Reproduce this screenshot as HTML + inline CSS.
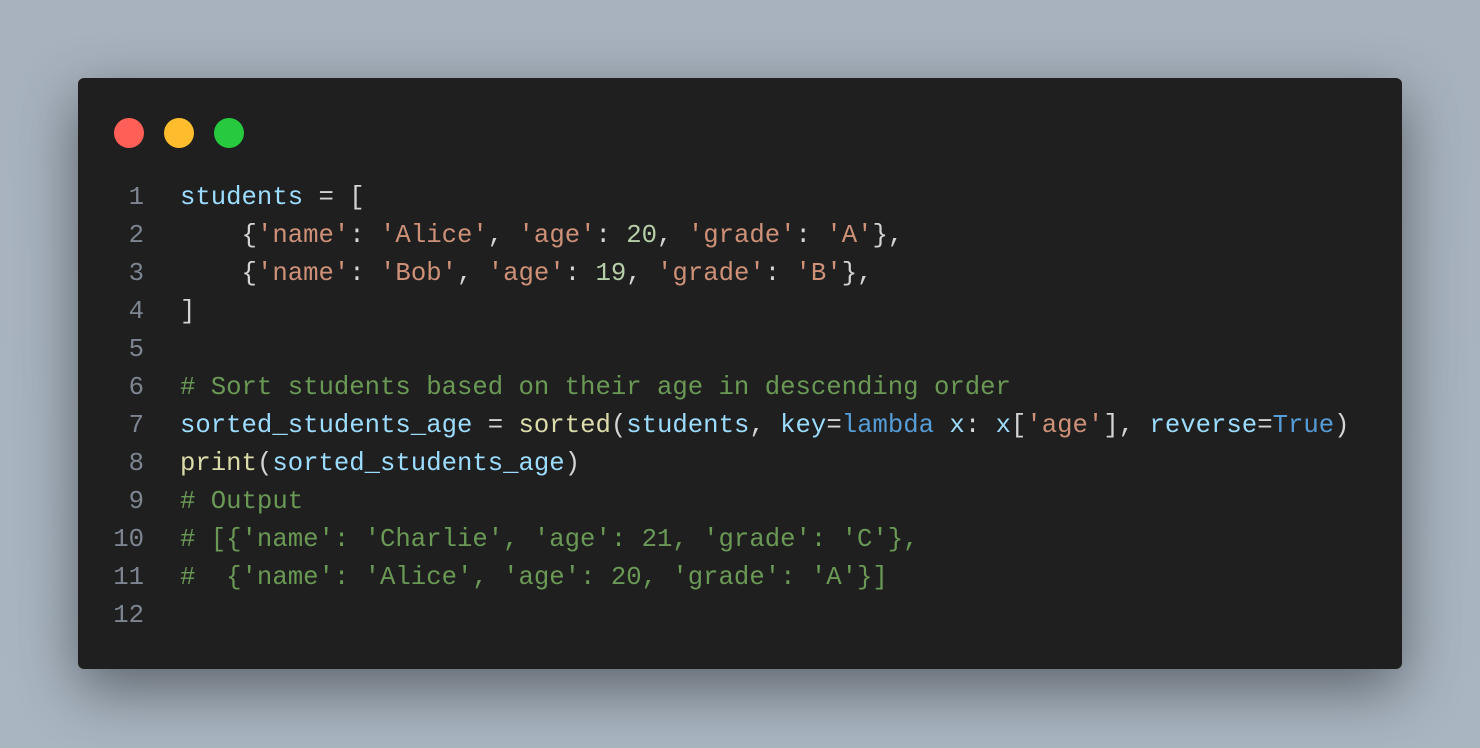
<!DOCTYPE html>
<html><head><meta charset="utf-8"><style>
body{margin:0;width:1480px;height:748px;background:linear-gradient(180deg,#a7b2be,#a9b5c1);overflow:hidden;position:relative}
.win{position:absolute;left:78px;top:78px;width:1324px;height:591px;background:#1f1f1f;border-radius:6px;box-shadow:0 20px 60px rgba(0,0,0,.45)}
.dot{position:absolute;top:40px;width:30px;height:30px;border-radius:50%}
pre{position:absolute;margin:0;top:101px;font-family:"Liberation Mono",monospace;font-size:25.65px;line-height:38px;color:#d4d4d4}
.ln{left:20px;width:46px;text-align:right;color:#7d8590}
.code{left:102px}
.v{color:#9cdcfe}.s{color:#ce9178}.n{color:#b5cea8}.c{color:#6a9955}.f{color:#dcdcaa}.k{color:#569cd6}
</style></head><body>
<div class="win">
<div class="dot" style="left:36px;background:#ff5f56"></div>
<div class="dot" style="left:86px;background:#ffbd2e"></div>
<div class="dot" style="left:136px;background:#27c93f"></div>
<pre class="ln">1
2
3
4
5
6
7
8
9
10
11
12</pre>
<pre class="code"><span class="v">students</span> = [
    {<span class="s">'name'</span>: <span class="s">'Alice'</span>, <span class="s">'age'</span>: <span class="n">20</span>, <span class="s">'grade'</span>: <span class="s">'A'</span>},
    {<span class="s">'name'</span>: <span class="s">'Bob'</span>, <span class="s">'age'</span>: <span class="n">19</span>, <span class="s">'grade'</span>: <span class="s">'B'</span>},
]

<span class="c"># Sort students based on their age in descending order</span>
<span class="v">sorted_students_age</span> = <span class="f">sorted</span>(<span class="v">students</span>, <span class="v">key</span>=<span class="k">lambda</span> <span class="v">x</span>: <span class="v">x</span>[<span class="s">'age'</span>], <span class="v">reverse</span>=<span class="k">True</span>)
<span class="f">print</span>(<span class="v">sorted_students_age</span>)
<span class="c"># Output</span>
<span class="c"># [{'name': 'Charlie', 'age': 21, 'grade': 'C'},</span>
<span class="c">#  {'name': 'Alice', 'age': 20, 'grade': 'A'}]</span>
</pre>
</div>
</body></html>
